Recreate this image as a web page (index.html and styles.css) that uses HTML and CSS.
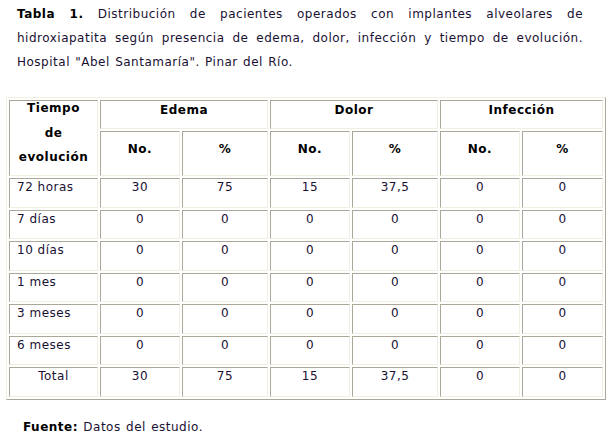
FILE: index.html
```html
<!DOCTYPE html>
<html lang="es">
<head>
<meta charset="utf-8">
<title>Tabla 1</title>
<link rel="stylesheet" href="styles.css">
</head>
<body>
<div class="page">
  <p class="caption"><b>Tabla 1.</b> Distribución de pacientes operados con implantes alveolares de hidroxiapatita según presencia de edema, dolor, infección y tiempo de evolución. Hospital "Abel Santamaría". Pinar del Río.</p>
  <table class="data">
    <colgroup>
      <col class="c-time"><col class="c-no"><col class="c-pct"><col class="c-no"><col class="c-pct"><col class="c-no"><col class="c-last">
    </colgroup>
    <thead>
      <tr class="h1">
        <th rowspan="2" class="time"><div class="stack"><span>Tiempo</span><span>de</span><span>evolución</span></div></th>
        <th colspan="2">Edema</th>
        <th colspan="2">Dolor</th>
        <th colspan="2">Infección</th>
      </tr>
      <tr class="h2">
        <th>No.</th><th>%</th><th>No.</th><th>%</th><th>No.</th><th>%</th>
      </tr>
    </thead>
    <tbody>
      <tr><td class="label">72 horas</td><td>30</td><td>75</td><td>15</td><td>37,5</td><td>0</td><td>0</td></tr>
      <tr><td class="label">7 días</td><td>0</td><td>0</td><td>0</td><td>0</td><td>0</td><td>0</td></tr>
      <tr><td class="label">10 días</td><td>0</td><td>0</td><td>0</td><td>0</td><td>0</td><td>0</td></tr>
      <tr><td class="label">1 mes</td><td>0</td><td>0</td><td>0</td><td>0</td><td>0</td><td>0</td></tr>
      <tr><td class="label">3 meses</td><td>0</td><td>0</td><td>0</td><td>0</td><td>0</td><td>0</td></tr>
      <tr><td class="label">6 meses</td><td>0</td><td>0</td><td>0</td><td>0</td><td>0</td><td>0</td></tr>
      <tr><td class="total">Total</td><td>30</td><td>75</td><td>15</td><td>37,5</td><td>0</td><td>0</td></tr>
    </tbody>
  </table>
  <p class="source"><b>Fuente:</b> Datos del estudio.</p>
</div>
</body>
</html>
```

FILE: styles.css
```css
html, body {
  margin: 0;
  padding: 0;
  background: #ffffff;
}

body {
  font-family: Verdana, "DejaVu Sans", sans-serif;
  font-size: 12px;
  letter-spacing: 0.5px;
  color: #1a1033;
}

.page {
  padding-top: 2px;
}

.caption {
  margin: 0;
  padding-left: 17px;
  width: 566px;
  line-height: 24px;
  text-align: justify;
  word-spacing: 1px;
}

.caption b,
.source b {
  color: #000000;
}

.data {
  margin: 23px 0 0 6px;
  width: 600px;
  table-layout: fixed;
  border-collapse: separate;
  border-spacing: 2px;
  border: 1px solid;
  border-color: #f1efe2 #aca899 #aca899 #f1efe2;
  box-sizing: border-box;
}

.c-time { width: 89px; }
.c-no { width: 80px; }
.c-pct { width: 86px; }
.c-last { width: 81px; }

.data th,
.data td {
  box-sizing: border-box;
  border: 1px solid;
  border-color: #aca899 #f1efe2 #f1efe2 #aca899;
  padding: 1px 1px 0;
  line-height: 15px;
  text-align: center;
  vertical-align: top;
  white-space: nowrap;
}

.data th {
  font-weight: bold;
  color: #000000;
}

.h1 { height: 29px; }
.h1 th { padding-top: 2px; }
.h2 { height: 45px; }
.h2 th { padding-top: 10px; }

.data th.time {
  padding-top: 0;
}

.stack {
  display: flex;
  flex-direction: column;
  align-items: center;
  gap: 9.5px;
}

.data tbody tr { height: 29.5px; }

.data td.label {
  text-align: left;
  padding-left: 7px;
}

.source {
  margin: 15px 0 0;
  padding-left: 23px;
  line-height: 24px;
  word-spacing: 1px;
}
```
